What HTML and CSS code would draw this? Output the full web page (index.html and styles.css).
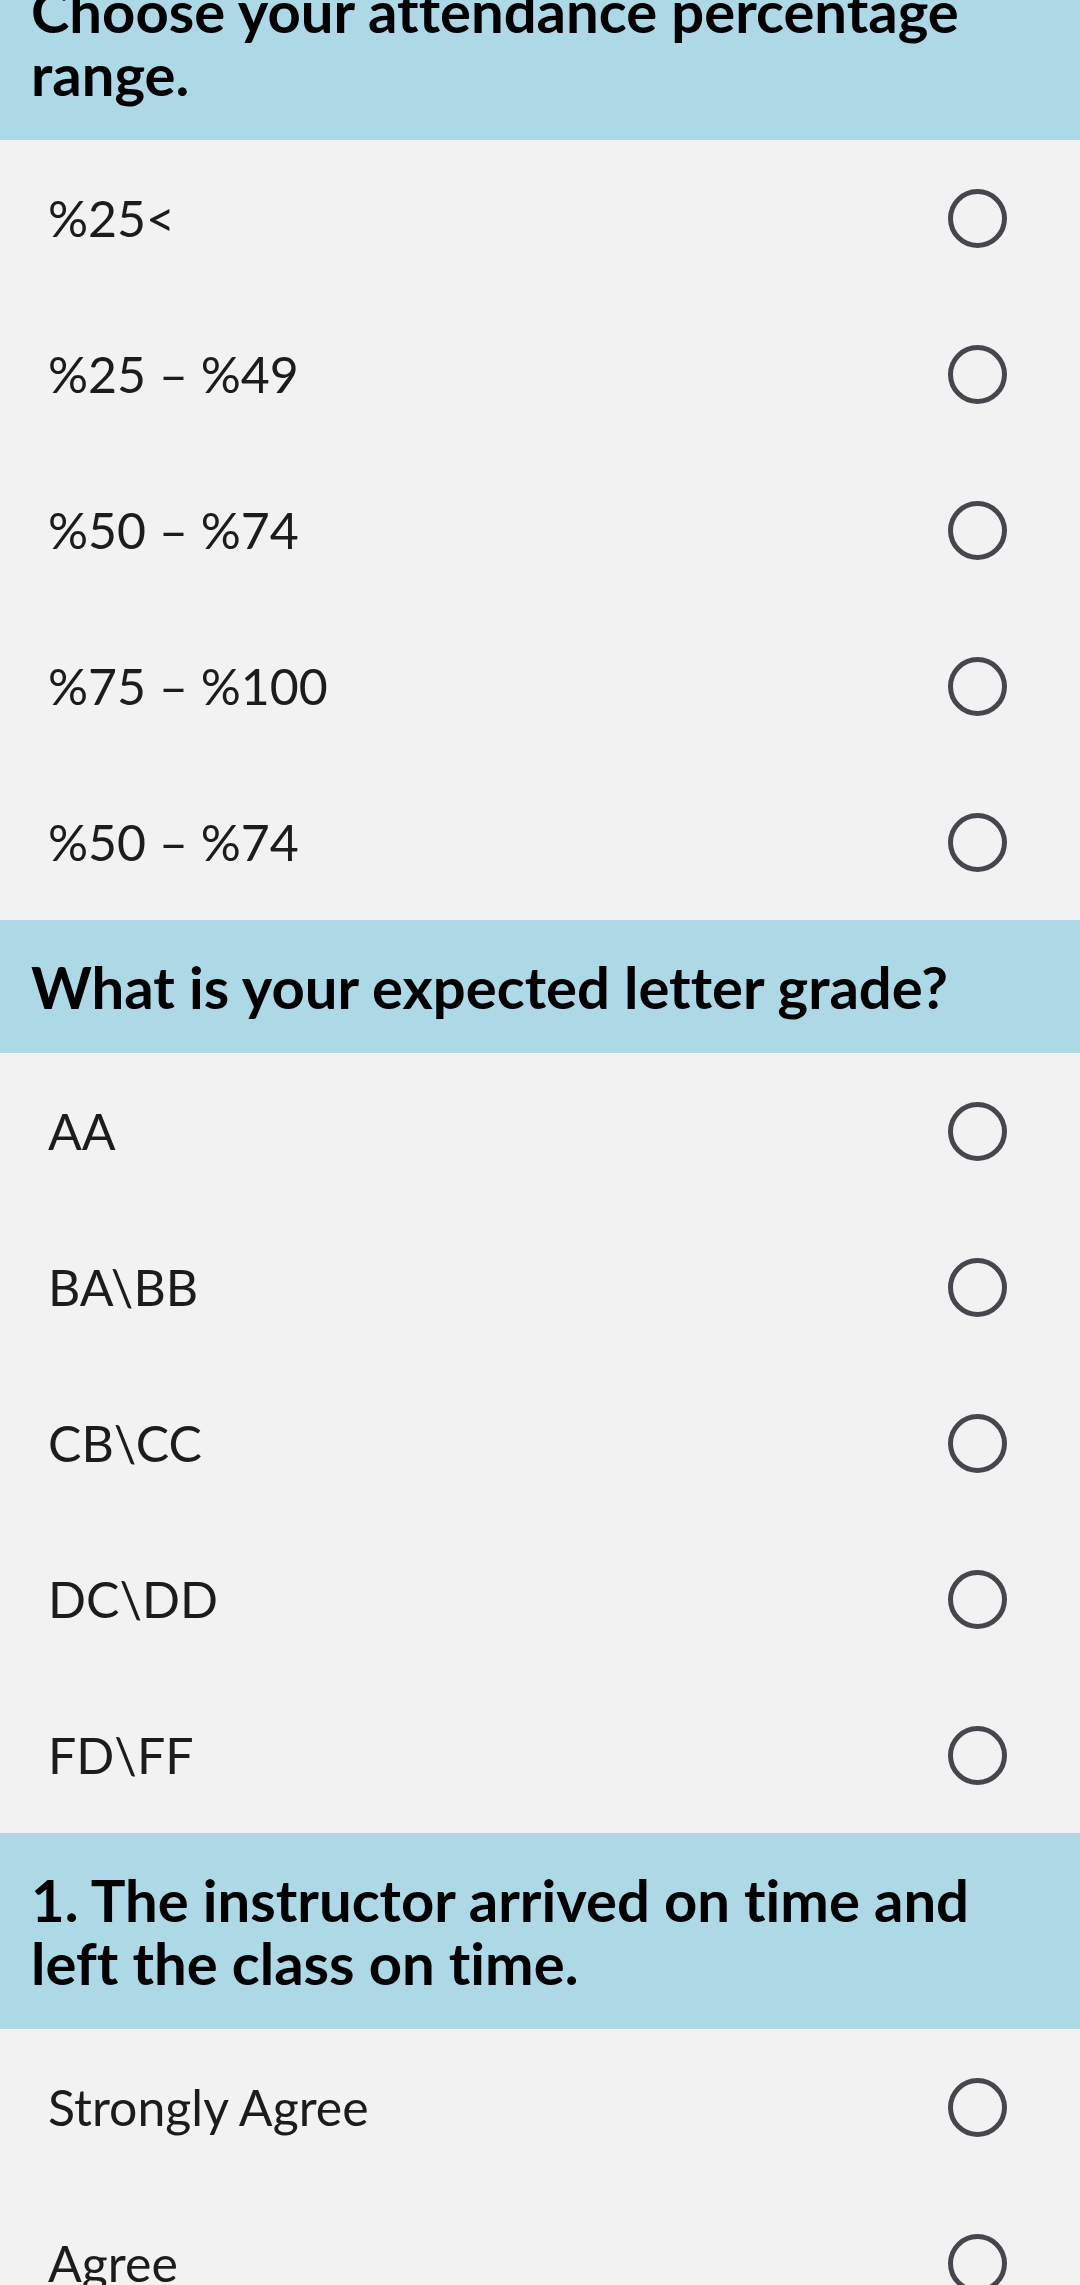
FILE: index.html
```html
<!DOCTYPE html>
<html lang="en">
<head>
<meta charset="utf-8">
<title>Survey</title>
<link rel="stylesheet" href="styles.css">
</head>
<body>
<main class="survey">
  <section class="question">
    <h2 class="question-title">Choose your attendance percentage range.</h2>
    <label class="option"><span class="option-text">%25&lt;</span><input class="radio" type="radio" name="q1"></label>
    <label class="option"><span class="option-text">%25 – %49</span><input class="radio" type="radio" name="q1"></label>
    <label class="option"><span class="option-text">%50 – %74</span><input class="radio" type="radio" name="q1"></label>
    <label class="option"><span class="option-text">%75 – %100</span><input class="radio" type="radio" name="q1"></label>
    <label class="option"><span class="option-text">%50 – %74</span><input class="radio" type="radio" name="q1"></label>
  </section>
  <section class="question">
    <h2 class="question-title">What is your expected letter grade?</h2>
    <label class="option"><span class="option-text">AA</span><input class="radio" type="radio" name="q2"></label>
    <label class="option"><span class="option-text">BA\BB</span><input class="radio" type="radio" name="q2"></label>
    <label class="option"><span class="option-text">CB\CC</span><input class="radio" type="radio" name="q2"></label>
    <label class="option"><span class="option-text">DC\DD</span><input class="radio" type="radio" name="q2"></label>
    <label class="option"><span class="option-text">FD\FF</span><input class="radio" type="radio" name="q2"></label>
  </section>
  <section class="question">
    <h2 class="question-title">1. The instructor arrived on time and left the class on time.</h2>
    <label class="option"><span class="option-text">Strongly Agree</span><input class="radio" type="radio" name="q3"></label>
    <label class="option"><span class="option-text">Agree</span><input class="radio" type="radio" name="q3"></label>
  </section>
</main>
</body>
</html>
```
FILE: styles.css
```css
html, body {
  margin: 0;
  padding: 0;
  background: #f2f2f2;
}
body {
  font-family: Lato, "Open Sans", sans-serif;
  color: #111;
  overflow: hidden;
  font-variant-ligatures: none;
}
.survey {
  display: flex;
  flex-direction: column;
  margin-top: -56px;
}
.question {
  display: flex;
  flex-direction: column;
}
.question-title {
  margin: 0;
  background: #add8e6;
  padding: 35px 30px 35px 31px;
  font-size: 58px;
  line-height: 63px;
  font-weight: 700;
  color: #000;
}
.option {
  height: 156px;
  display: flex;
  align-items: center;
  justify-content: space-between;
  padding: 0 73px 0 48px;
  box-sizing: border-box;
}
.option-text {
  font-size: 50px;
  font-weight: 400;
  color: #1c1c1e;
}
.radio {
  appearance: none;
  -webkit-appearance: none;
  margin: 0;
  width: 59px;
  height: 59px;
  box-sizing: border-box;
  border: 5.5px solid #48464c;
  border-radius: 50%;
  background: transparent;
}
```
